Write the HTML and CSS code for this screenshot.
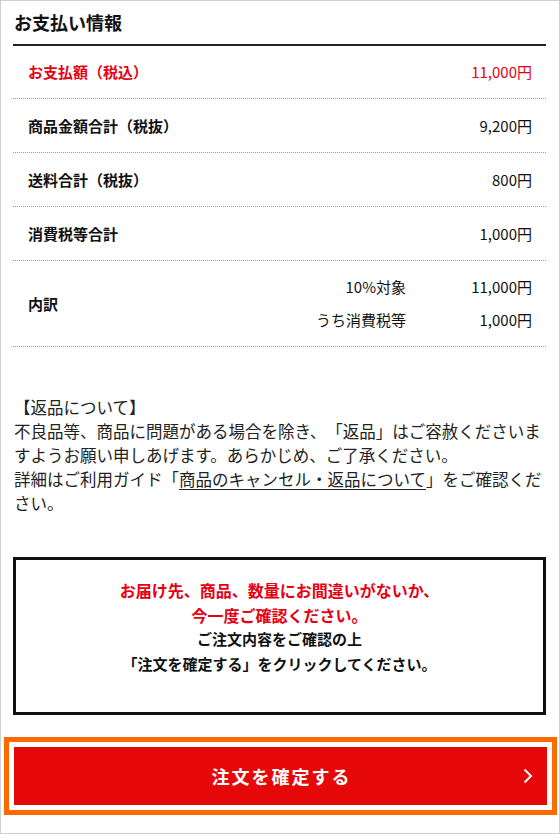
FILE: index.html
```html
<!DOCTYPE html>
<html lang="ja">
<head>
<meta charset="utf-8">
<title>お支払い情報</title>
<link rel="stylesheet" href="styles.css">
</head>
<body>
<div class="page">
  <h2 class="title">お支払い情報</h2>
  <div class="row row--total">
    <span class="row__label">お支払額（税込）</span>
    <span class="row__value">11,000円</span>
  </div>
  <div class="row">
    <span class="row__label">商品金額合計（税抜）</span>
    <span class="row__value">9,200円</span>
  </div>
  <div class="row">
    <span class="row__label">送料合計（税抜）</span>
    <span class="row__value">800円</span>
  </div>
  <div class="row">
    <span class="row__label">消費税等合計</span>
    <span class="row__value">1,000円</span>
  </div>
  <div class="row row--breakdown">
    <span class="row__label">内訳</span>
    <div class="breakdown">
      <span class="breakdown__label">10%対象</span>
      <span class="breakdown__value">11,000円</span>
      <span class="breakdown__label">うち消費税等</span>
      <span class="breakdown__value">1,000円</span>
    </div>
  </div>

  <p class="notice">【返品について】<br>不良品等、商品に問題がある場合を除き、「返品」はご容赦くださいますようお願い申しあげます。あらかじめ、ご了承ください。<br>詳細はご利用ガイド「<a class="notice__link" href="#">商品のキャンセル・返品について</a>」をご確認ください。</p>

  <div class="confirm">
    <p class="confirm__alert">お届け先、商品、数量にお間違いがないか、<br>今一度ご確認ください。</p>
    <p class="confirm__text">ご注文内容をご確認の上<br>「注文を確定する」をクリックしてください。</p>
  </div>

  <button class="submit" type="button">
    <span class="submit__label">注文を確定する</span>
    <svg class="submit__arrow" width="10" height="16" viewBox="0 0 10 16" aria-hidden="true"><path d="M1.5 1.5 L8 8 L1.5 14.5" fill="none" stroke="#fff" stroke-width="2"/></svg>
  </button>
</div>
</body>
</html>
```

FILE: styles.css
```css
* { box-sizing: border-box; }
html, body { margin: 0; padding: 0; background: #fff; }
body {
  font-family: "Noto Sans CJK JP", "Noto Sans", sans-serif;
  color: #111;
  text-spacing-trim: space-all;
}
.page {
  width: 560px;
  height: 834px;
  border: 1px solid #cfcfcf;
  padding: 0 13px 0 12px;
  overflow: hidden;
}
.title {
  margin: 0;
  padding: 9px 0 10px 1px;
  font-size: 18px;
  line-height: 24px;
  font-weight: bold;
  border-bottom: 2px solid #222;
}
.row {
  display: flex;
  justify-content: space-between;
  align-items: center;
  padding: 15px 14px 14px 15px;
  border-bottom: 1px dotted #9a9a9a;
  font-size: 15px;
  line-height: 24px;
}
.row--total {
  padding-top: 14px;
  color: #e60012;
}
.row__label { font-weight: bold; }
.row__value { font-weight: normal; }
.row--breakdown {
  padding-top: 14px;
  padding-bottom: 14px;
}
.breakdown {
  display: grid;
  grid-template-columns: auto 126px;
  row-gap: 9px;
  justify-items: end;
}
.notice {
  margin: 48px 0 0 1px;
  font-size: 16.5px;
  line-height: 24px;
  color: #222;
}
.notice__link { color: #222; text-decoration: underline; text-underline-offset: 3px; }
.confirm {
  margin-top: 42px;
  border: 3px solid #111;
  padding: 18px 0 36px;
  text-align: center;
  font-weight: bold;
  line-height: 24.5px;
}
.confirm p { margin: 0; }
.confirm__alert { color: #e60012; font-size: 16px; }
.confirm__text { color: #111; font-size: 15px; }
.submit {
  position: relative;
  display: flex;
  align-items: center;
  justify-content: center;
  width: 533px;
  height: 58px;
  margin: 32px 0 0 1px;
  border: 0;
  background: #e60808;
  color: #fff;
  font-family: inherit;
  font-size: 18px;
  font-weight: bold;
  letter-spacing: 2px;
  outline: 5px solid #ff6a00;
  outline-offset: 5px;
  padding: 0;
}
.submit__label { padding-left: 2px; }
.submit__arrow {
  position: absolute;
  right: 14px;
  top: 21px;
}
```
